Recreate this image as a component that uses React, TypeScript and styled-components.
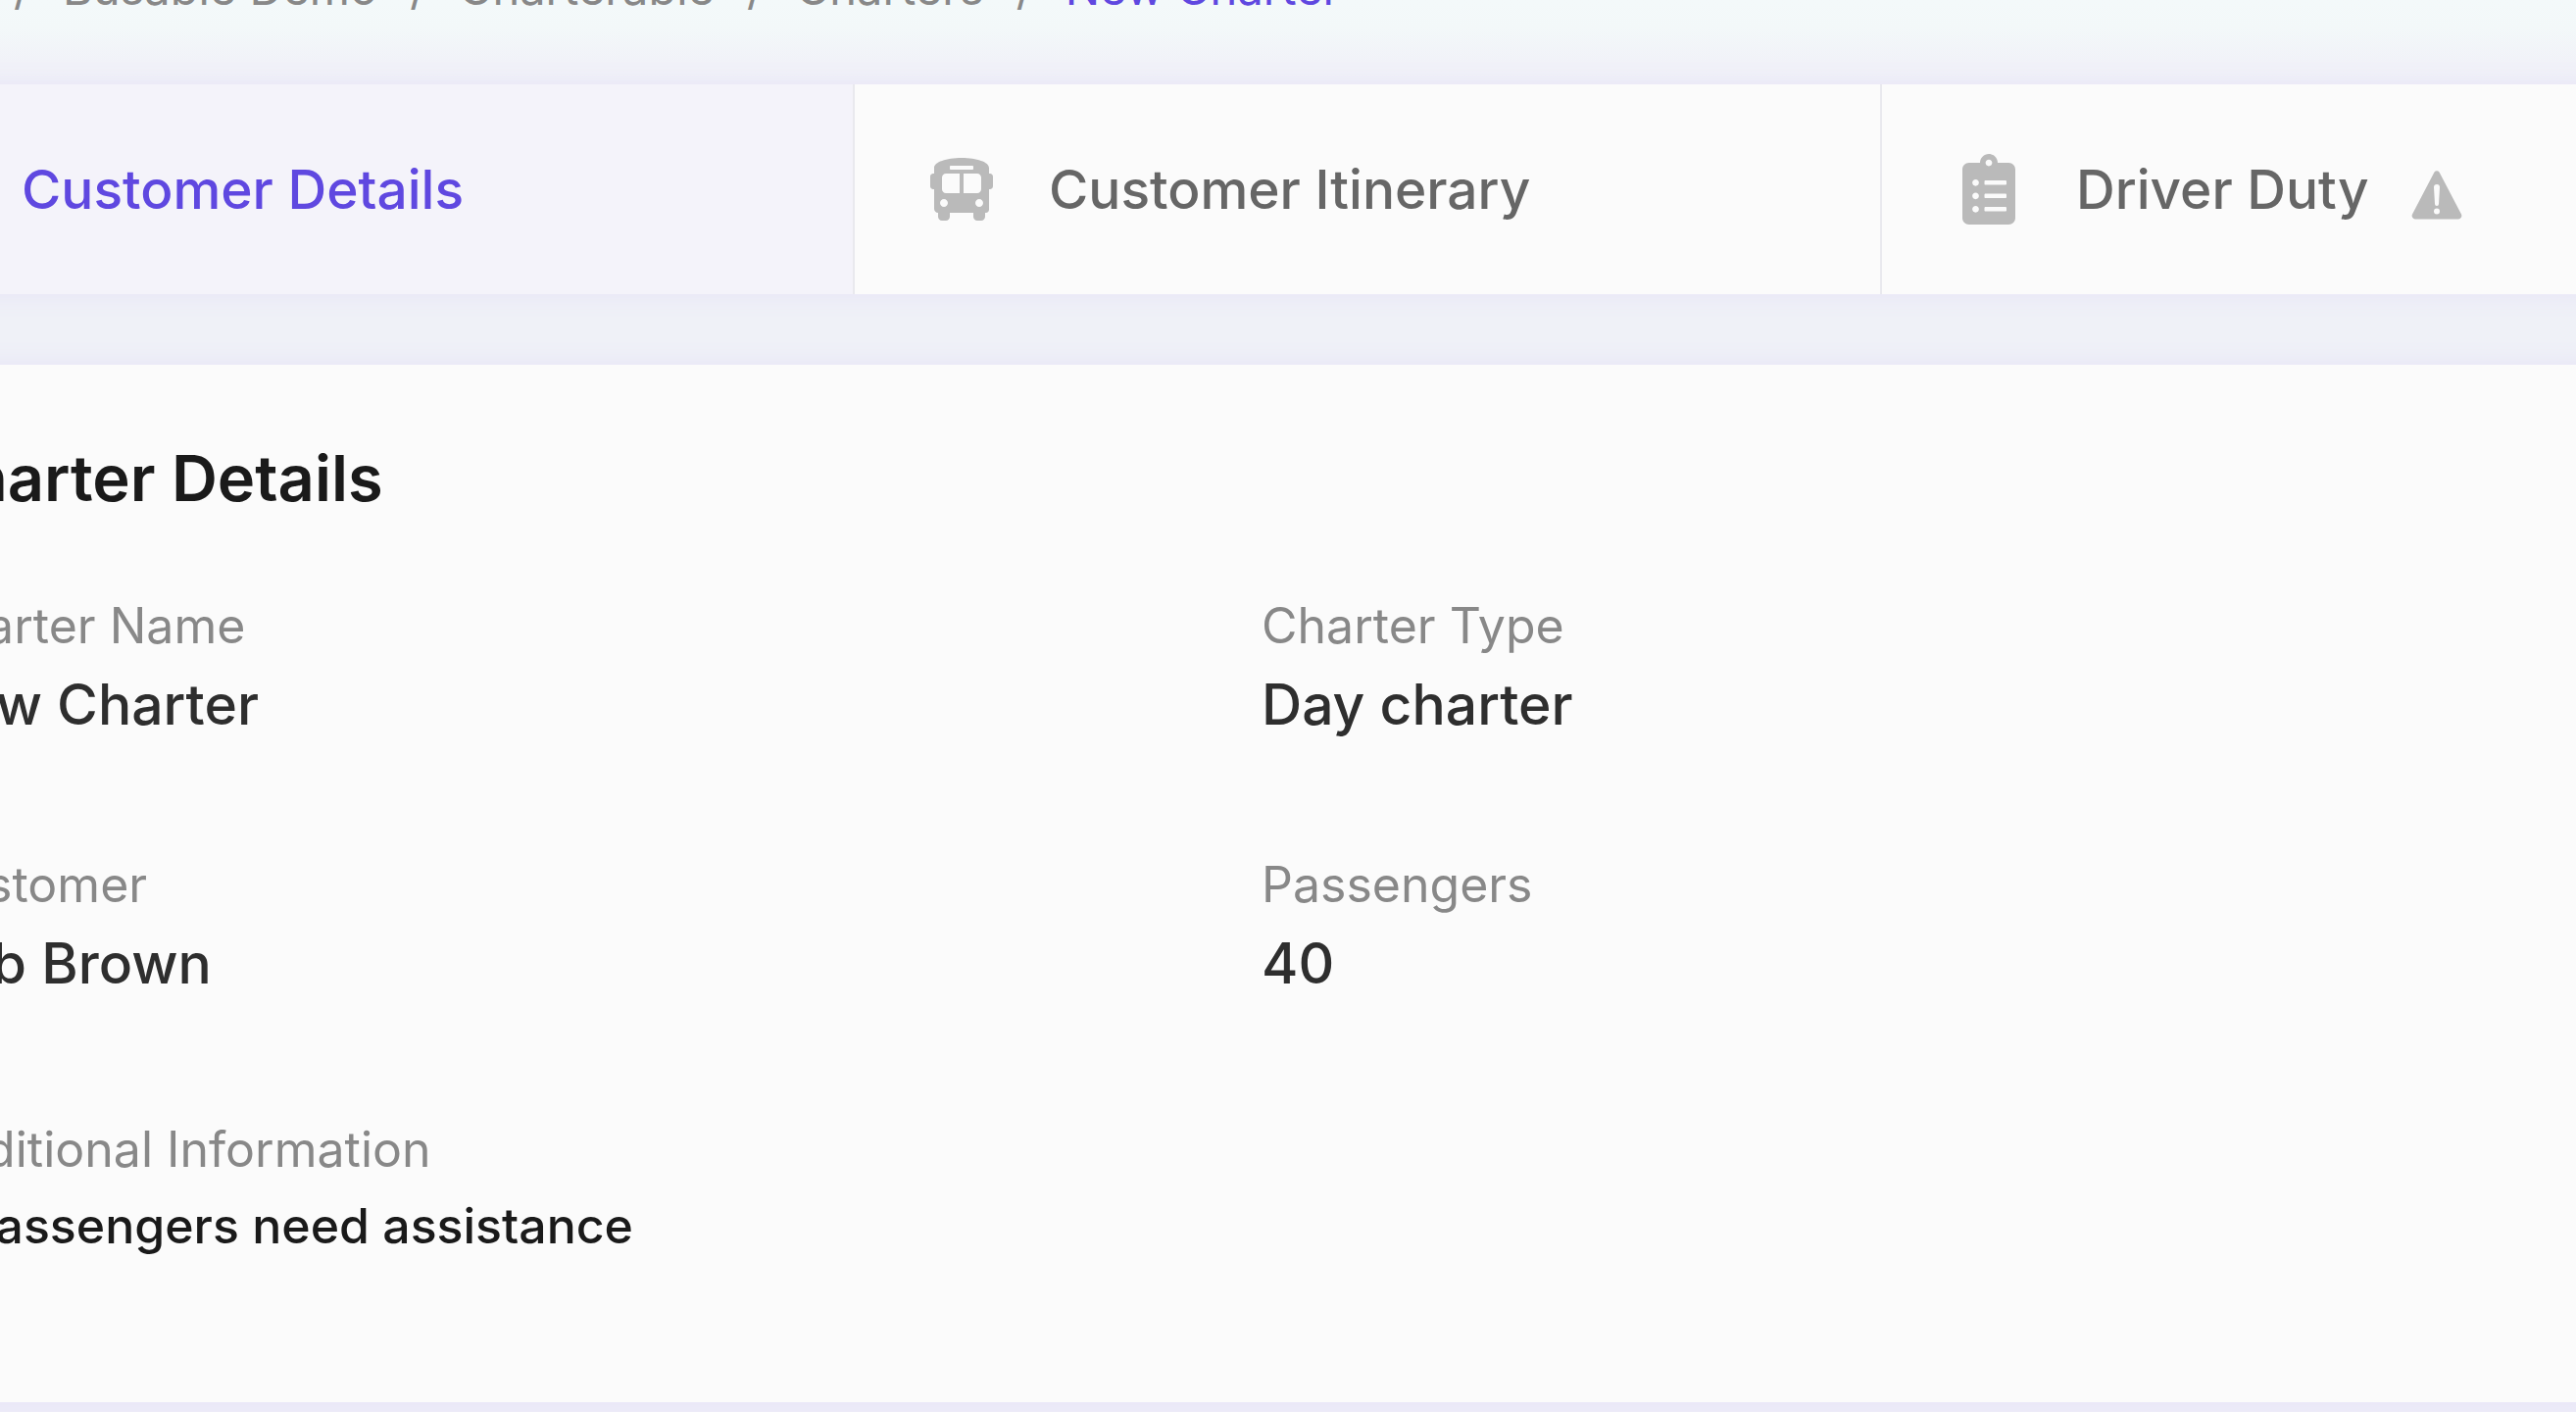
import React from "react";
import styled, { createGlobalStyle } from "styled-components";
import { FaBusAlt, FaClipboardList, FaUser } from "react-icons/fa";

const GlobalStyle = createGlobalStyle`
  * { box-sizing: border-box; }
  body {
    margin: 0;
    overflow: hidden;
    background: #eeedf8;
    font-family: Inter, "Liberation Sans", sans-serif;
  }
`;

const Page = styled.main`
  display: flow-root;
  margin: 0 -340px 0 -176px;
  padding-bottom: 40px;
  background: linear-gradient(#f3f9fa 0, #f3f8f9 28px, #f1f2f8 64px, #eff1f7 300px, #eff1f7 1000px, #eeedf9 1400px);
`;

const Breadcrumb = styled.nav`
  display: flow-root;
  height: 86px;
  padding-left: 190px;
`;

const Crumbs = styled.ol`
  display: flex;
  gap: 33px;
  margin: -42px 0 0;
  padding: 0;
  list-style: none;
  font-size: 47px;
  line-height: 60px;
  color: #888;
`;

const Crumb = styled.li`
  display: flex;
  gap: 33px;
  white-space: nowrap;

  &::before {
    content: "/";
  }
`;

const CrumbLink = styled.a<{ $current?: boolean }>`
  color: ${(p) => (p.$current ? "#5f48e0" : "inherit")};
  text-decoration: none;
`;

const Tabs = styled.div`
  position: relative;
  display: flex;
  background: #fbfbfb;
  box-shadow: 0 0 24px #e6e3f6;
`;

const Tab = styled.button<{ $active?: boolean }>`
  flex: 1;
  display: flex;
  align-items: center;
  gap: 42px;
  padding: 71px 0 71px 62px;
  border: 0;
  border-right: 2px solid #e9e9ee;
  background: ${(p) => (p.$active ? "#f4f3fa" : "#fbfbfb")};
  color: ${(p) => (p.$active ? "#5f48e0" : "#666")};
  font: 500 55px/64px Inter, "Liberation Sans", sans-serif;
  text-align: left;
`;

const TabIcon = styled.span<{ $size: number }>`
  display: flex;
  align-items: center;
  justify-content: center;
  width: 94px;
  height: 72px;
  color: #bababa;
  font-size: ${(p) => p.$size}px;
`;

const Warning = styled.svg`
  width: 54px;
  height: 54px;
  margin-top: 12px;
  fill: #bababa;
`;

const Panel = styled.section`
  position: relative;
  margin-top: 72px;
  padding: 80px 314px 142px 96px;
  background: #fbfbfb;
  box-shadow: 0 0 24px #e6e3f6;
`;

const Title = styled.h1`
  margin: 0 0 74px;
  color: #1a1a1a;
  font-size: 65px;
  font-weight: 600;
  line-height: 72px;
`;

const Details = styled.dl`
  display: grid;
  grid-template-columns: 1fr 1fr;
  row-gap: 102px;
  margin: 0;
`;

const Detail = styled.div<{ $note?: boolean }>`
  padding-top: ${(p) => (p.$note ? 6 : 0)}px;
`;

const Label = styled.dt`
  color: #888;
  font-size: 50px;
  line-height: 80px;
`;

const Value = styled.dd<{ $note?: boolean }>`
  margin: 0;
  color: ${(p) => (p.$note ? "#1a1a1a" : "#2e2e2e")};
  font-size: ${(p) => (p.$note ? 50 : 57)}px;
  font-weight: 500;
  line-height: ${(p) => (p.$note ? 76 : 82)}px;
  white-space: nowrap;
`;

const crumbs = ["Busable Demo", "Charterable", "Charters", "New Charter"];

const details = [
  { label: "Charter Name", value: "New Charter" },
  { label: "Charter Type", value: "Day charter" },
  { label: "Customer", value: "Bob Brown" },
  { label: "Passengers", value: "40" },
  { label: "Additional Information", value: "2 passengers need assistance", note: true },
];

export default function App() {
  return (
    <>
      <GlobalStyle />
      <Page>
        <Breadcrumb aria-label="Breadcrumb">
          <Crumbs>
            {crumbs.map((name, i) => (
              <Crumb key={name}>
                <CrumbLink href="#" $current={i === crumbs.length - 1}>{name}</CrumbLink>
              </Crumb>
            ))}
          </Crumbs>
        </Breadcrumb>
        <Tabs role="tablist">
          <Tab role="tab" aria-selected="true" $active>
            <TabIcon $size={64}><FaUser /></TabIcon>
            Customer Details
          </Tab>
          <Tab role="tab" aria-selected="false">
            <TabIcon $size={64}><FaBusAlt /></TabIcon>
            Customer Itinerary
          </Tab>
          <Tab role="tab" aria-selected="false">
            <TabIcon $size={72}><FaClipboardList /></TabIcon>
            Driver Duty
            <Warning viewBox="0 0 54 54" aria-label="Warning">
              <path
                fillRule="evenodd"
                d="M24.5 3.5a3.2 3.2 0 0 1 5 0L52 46.500a3.500 3.500 0 0 1-3 5H5a3.500 3.500 0 0 1-3-5ZM24 19l1 17a2 2 0 0 0 4 0l1-17a3 3 0 0 0-6 0ZM27 40.500a3 3 0 1 0 0 6 3 3 0 0 0 0-6Z"
              />
            </Warning>
          </Tab>
        </Tabs>
        <Panel>
          <Title>Charter Details</Title>
          <Details>
            {details.map((d) => (
              <Detail key={d.label} $note={d.note}>
                <Label>{d.label}</Label>
                <Value $note={d.note}>{d.value}</Value>
              </Detail>
            ))}
          </Details>
        </Panel>
      </Page>
    </>
  );
}
